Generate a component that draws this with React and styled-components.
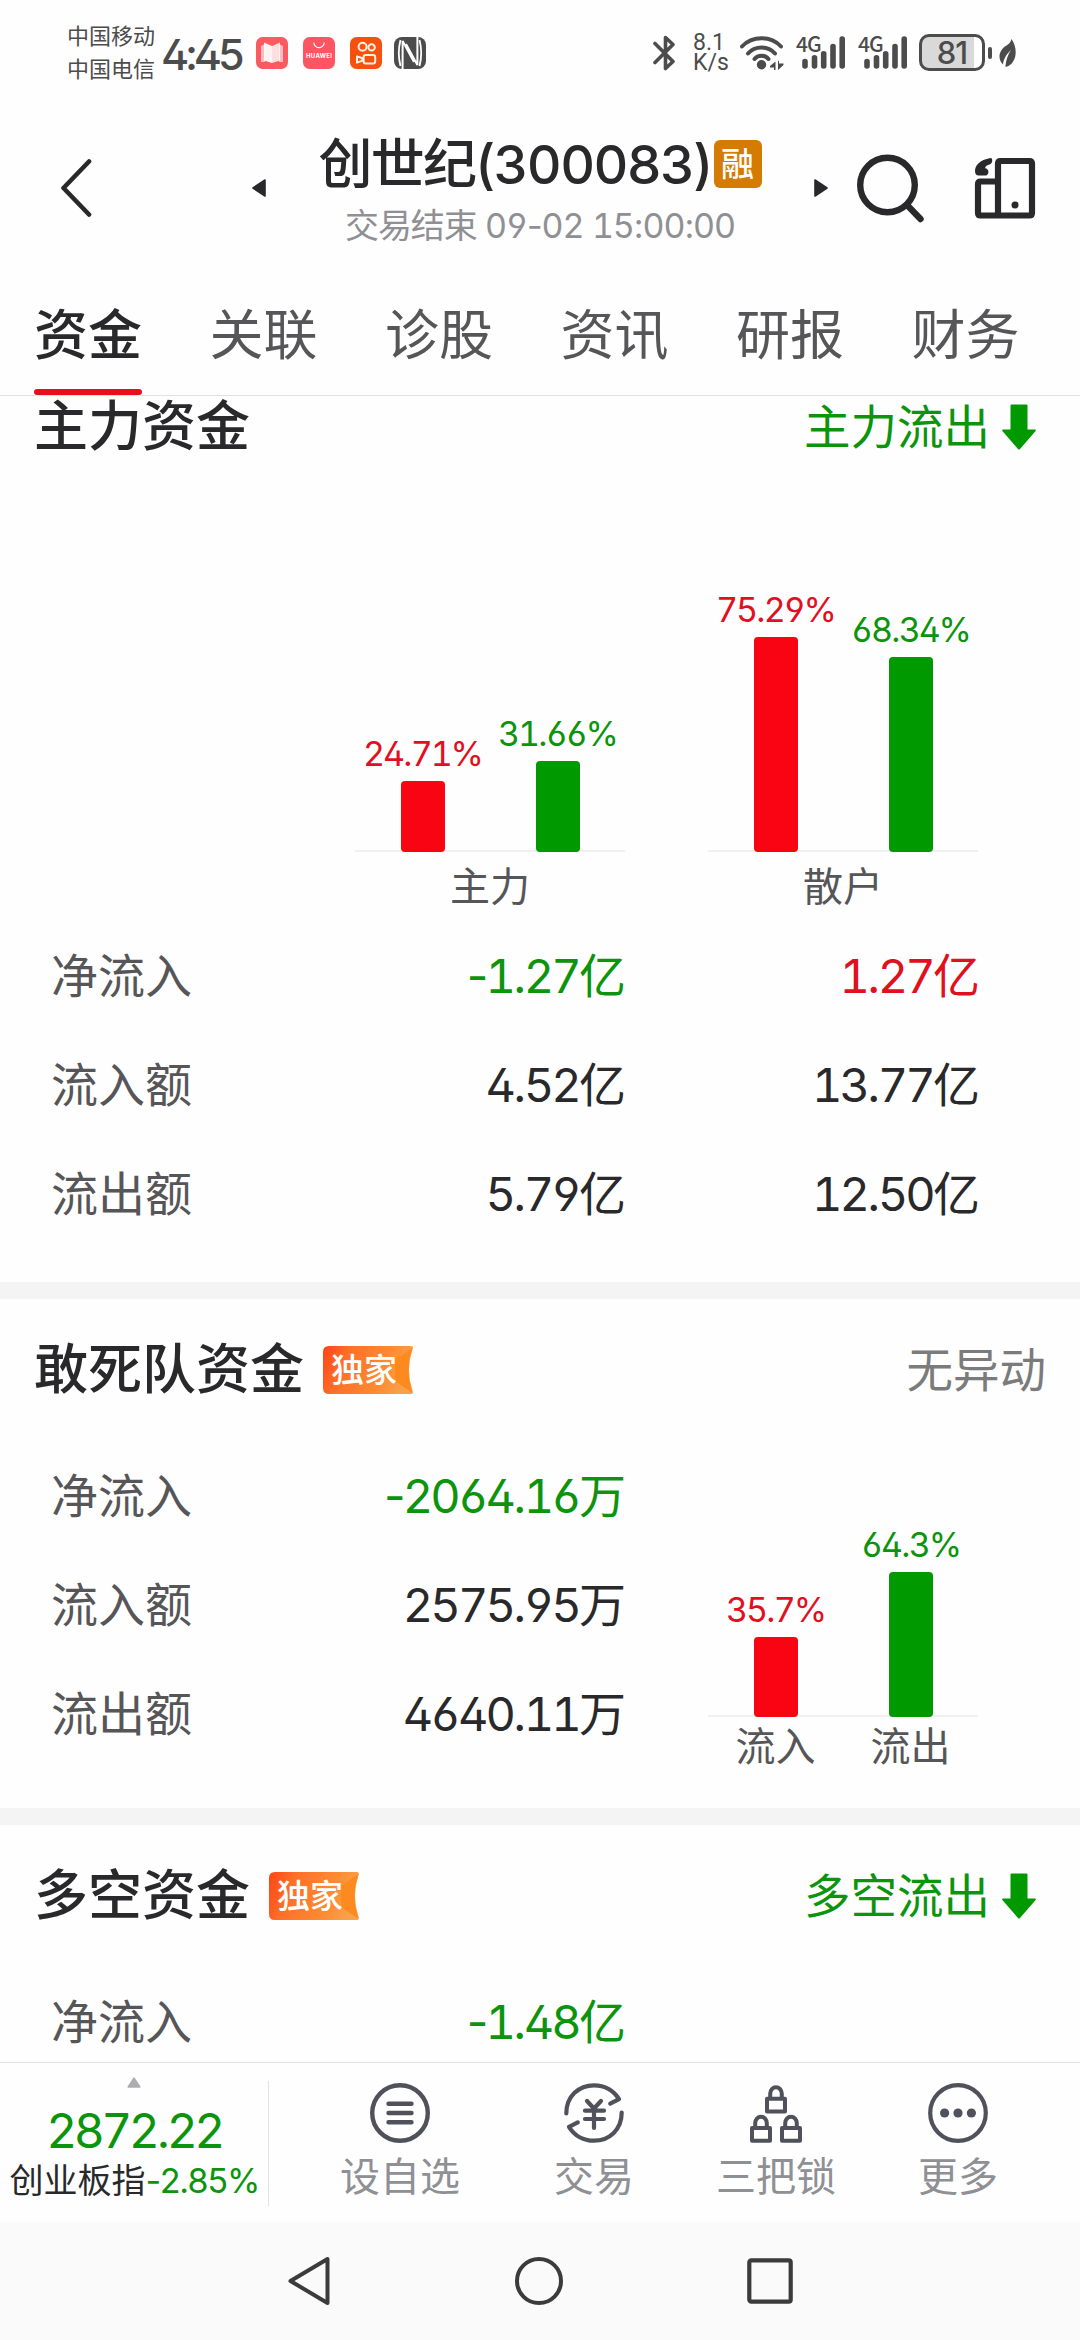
import React from 'react';
import styled, {createGlobalStyle} from 'styled-components';

const colors = {
	text : '#29292b',
	sub : '#565658',
	muted : '#8f9094',
	status : '#4c4c4c',
	red : '#e01020',
	green : '#0c940c',
	barRed : '#f80412',
	barGreen : '#009900',
	line : '#e2e2e2'
}

const tabs = ['资金', '关联', '诊股', '资讯', '研报', '财务'];

const mainCharts = [
	{
		name : '主力',
		bars : [{value : 24.71, tone : 'red'}, {value : 31.66, tone : 'green'}]
	},
	{
		name : '散户',
		bars : [{value : 75.29, tone : 'red'}, {value : 68.34, tone : 'green'}]
	}
]

const mainRows = [
	{label : '净流入', values : [{text : '-1.27亿', tone : 'green'}, {text : '1.27亿', tone : 'red'}]},
	{label : '流入额', values : [{text : '4.52亿'}, {text : '13.77亿'}]},
	{label : '流出额', values : [{text : '5.79亿'}, {text : '12.50亿'}]}
]

const squadRows = [
	{label : '净流入', values : [{text : '-2064.16万', tone : 'green'}]},
	{label : '流入额', values : [{text : '2575.95万'}]},
	{label : '流出额', values : [{text : '4640.11万'}]}
]

const squadBars = [
	{value : 35.7, tone : 'red', name : '流入'},
	{value : 64.3, tone : 'green', name : '流出'}
]

const longShortRows = [
	{label : '净流入', values : [{text : '-1.48亿', tone : 'green'}]}
]

/* ---------- icons ---------- */

const BookIcon = () => (
	<svg width="32" height="32" viewBox="0 0 32 32">
		<rect width="32" height="32" rx="6.5" fill="#fb5a60"/>
		<path d="M5 9 L9 7 V25 H5 Z M27 9 L23 7 V25 H27 Z" fill="#fff" opacity="0.6"/>
		<path d="M8 5.5 L16 9 V26 L8 23.5 Z" fill="#fff" opacity="0.92"/>
		<path d="M24 5.5 L16 9 V26 L24 23.5 Z" fill="#fff" opacity="0.8"/>
	</svg>
)

const HuaweiIcon = () => (
	<svg width="32" height="32" viewBox="0 0 32 32">
		<rect width="32" height="32" rx="6.5" fill="#fd5562"/>
		<path d="M10.8 5.5 A5.2 5.2 0 0 0 21.2 5.5" fill="none" stroke="#fff" strokeWidth="1.1"/>
		<text x="16" y="21" textAnchor="middle" textLength="26" fontFamily="Inter, sans-serif" fontWeight="700" fontSize="6" fill="#fff">HUAWEI</text>
	</svg>
)

const CameraIcon = () => (
	<svg width="32" height="32" viewBox="0 0 32 32">
		<rect width="32" height="32" rx="6.5" fill="#f8500e"/>
		<g fill="none" stroke="#fff2e4" strokeWidth="2">
			<circle cx="12.6" cy="9.8" r="4"/>
			<circle cx="21.6" cy="10.4" r="3.2"/>
			<rect x="13.6" y="18" width="11.6" height="8.4" rx="2.2"/>
			<path d="M7 19.4 L12.4 21.2 V23.6 L7 25.6 Z" strokeLinejoin="round"/>
		</g>
	</svg>
)

const NfcIcon = () => (
	<svg width="32" height="32" viewBox="0 0 32 32">
		<rect width="32" height="32" rx="8" fill={colors.status}/>
		<g fill="none" stroke="#fff" strokeWidth="1.8">
			<path d="M6.5 3 C4.4 11 4.4 21 6.5 29"/>
			<path d="M25.5 3 C27.6 11 27.6 21 25.5 29"/>
			<path d="M8.6 32 V4 L20 25 M23.4 0 V28 L12 7" strokeWidth="2"/>
		</g>
	</svg>
)

const BluetoothIcon = () => (
	<svg width="24" height="36" viewBox="0 0 24 36">
		<path d="M2 8.5 L20 26.5 L12.5 33.5 V2.5 L20 9.5 L2 27.5" fill="none" stroke={colors.status} strokeWidth="3.6" strokeLinecap="round" strokeLinejoin="round"/>
	</svg>
)

const WifiIcon = () => (
	<svg width="46" height="36" viewBox="0 0 46 36">
		<g fill="none" stroke={colors.status} strokeWidth="4" strokeLinecap="round">
			<path d="M3 11.5 C13 0.5 32 0.5 42 11.5"/>
			<path d="M9 18.5 C16 10.5 29 10.5 36 18.5"/>
			<path d="M15.5 24 C19 19.8 26 19.8 29.5 24"/>
		</g>
		<circle cx="22.5" cy="29.8" r="4.7" fill={colors.status}/>
		<path d="M31 31 L36.5 26.5 V35 H35 V32.4 H31 Z M44.5 30 L39 35 V26 H40 V28.5 H44.5 Z" fill={colors.status}/>
	</svg>
)

const SignalIcon = () => (
	<StyledSignal>
		<span>4G</span>
		<svg width="52" height="36" viewBox="0 0 52 36">
			<path d="M10 26.5 V31 M19.5 22.8 V31 M28.7 18.8 V31 M38 11.5 V31 M47.2 4 V31" stroke={colors.status} strokeWidth="5.6" strokeLinecap="round"/>
		</svg>
	</StyledSignal>
)

const LeafIcon = () => (
	<svg width="20" height="30" viewBox="0 0 20 30">
		<path d="M13.5 1 C19.5 9 19.5 23 10.5 28 C9.2 28.7 8 29 7.4 28.6 C8 22 10 16.5 13 12 C9 15.5 5.6 20.5 5 26.6 C-1 20.5 1 12 8.5 7.5 C11 6 12.6 4.2 13.5 1 Z" fill={colors.status}/>
	</svg>
)

const BackIcon = () => (
	<svg width="32" height="60" viewBox="0 0 32 60">
		<path d="M29 3.5 L3.5 30 L29 56.5" fill="none" stroke={colors.text} strokeWidth="4.6" strokeLinecap="round" strokeLinejoin="round"/>
	</svg>
)

const Triangle = ({next}) => (
	<svg width="14" height="20" viewBox="0 0 14 20">
		<path d={next ? 'M1 2 L13 10 L1 18 Z' : 'M13 2 L1 10 L13 18 Z'} fill={colors.text} stroke={colors.text} strokeWidth="1.6" strokeLinejoin="round"/>
	</svg>
)

const SearchIcon = () => (
	<svg width="72" height="72" viewBox="0 0 72 72">
		<g fill="none" stroke={colors.text} strokeWidth="6.4" strokeLinecap="round">
			<circle cx="32.5" cy="33" r="27.3"/>
			<path d="M52.5 53.5 L65.5 67"/>
		</g>
	</svg>
)

const DevicesIcon = () => (
	<svg width="62" height="64" viewBox="0 0 62 64">
		<g fill="none" stroke={colors.text} strokeWidth="6.2" strokeLinejoin="round">
			<path d="M24 60 V7.5 Q24 5 26.5 5 H55.5 Q58 5 58 7.5 V57 Q58 59.5 55.5 59.5 H6.5 Q4 59.5 4 57 V28 Q4 25.5 6.5 25.5 H24"/>
		</g>
		<circle cx="41" cy="49" r="3.5" fill={colors.text}/>
		<path d="M16.5 2 C5.5 4 1 9.5 1 15 C1 18 2.5 19.5 4.5 19.5 H11.5 C15.5 19.5 15.5 12.5 11 12.3 C11.5 10 13 9 16 8.2 C19 7.2 18.8 1.8 16.5 2 Z" fill={colors.text}/>
	</svg>
)

const DownArrow = () => (
	<svg width="34" height="46" viewBox="0 0 34 46">
		<path d="M8.5 1.5 Q8.5 0.5 9.5 0.5 H24.5 Q25.5 0.5 25.5 1.5 V25.5 H33 Q34.3 25.8 33.6 27 L18 45 Q17 46 16 45 L0.4 27 Q-0.3 25.8 1 25.5 H8.5 Z" fill={colors.barGreen}/>
	</svg>
)

const ListIcon = () => (
	<svg width="62" height="62" viewBox="0 0 62 62">
		<g fill="none" stroke="#50515a" strokeWidth="4.4" strokeLinecap="round">
			<circle cx="31" cy="31" r="27.8"/>
			<path d="M19.5 21.7 H42.5 M19.5 31 H42.5 M19.5 40.3 H42.5"/>
		</g>
	</svg>
)

const TradeIcon = () => (
	<svg width="62" height="62" viewBox="0 0 62 62">
		<g fill="none" stroke="#50515a" strokeWidth="4.2" strokeLinecap="round" strokeLinejoin="round">
			<path d="M3.3 31.5 C3.3 14 16 3.3 31 3.3 C42 3.3 51 9 56 17.2 L47.2 21.6"/>
			<path d="M58.7 30.5 C58.7 48 46 58.7 31 58.7 C20 58.7 11 53 6 44.8 L14.8 40.4"/>
			<path d="M24 19 L31 26.5 L38 19 M22 28.7 H41 M22 37 H41 M31 27 V46"/>
		</g>
	</svg>
)

const LocksIcon = () => (
	<svg width="62" height="62" viewBox="0 0 62 62">
		<g fill="none" stroke="#50515a" strokeWidth="4" strokeLinejoin="round">
			<path d="M22 16.7 H40 V29.5 H22 Z M25.2 16.5 V11.5 A5.8 6.3 0 0 1 36.8 11.5 V16.5"/>
			<path d="M7 46 H25 V58.8 H7 Z M10.2 46 V41 A5.8 6.3 0 0 1 21.8 41 V46"/>
			<path d="M37 46 H55 V58.8 H37 Z M40.2 46 V41 A5.8 6.3 0 0 1 51.8 41 V46"/>
		</g>
	</svg>
)

const MoreIcon = () => (
	<svg width="62" height="62" viewBox="0 0 62 62">
		<circle cx="31" cy="31" r="27.8" fill="none" stroke="#50515a" strokeWidth="4.2"/>
		<g fill="#50515a">
			<circle cx="17.6" cy="31" r="4.6"/>
			<circle cx="31" cy="31" r="4.6"/>
			<circle cx="44.4" cy="31" r="4.6"/>
		</g>
	</svg>
)

const ExclusiveBadge = () => (
	<StyledBadge>
		<svg width="90" height="48" viewBox="0 0 90 48">
			<defs>
				<linearGradient id="exclusive" x1="0" y1="0" x2="1" y2="0.2">
					<stop offset="0" stopColor="#fe4415"/>
					<stop offset="0.3" stopColor="#fe702a"/>
					<stop offset="0.75" stopColor="#fd8b32"/>
					<stop offset="1" stopColor="#f9a04a"/>
				</linearGradient>
			</defs>
			<path d="M6 0 H88 Q91 0.5 89.5 3.5 Q82.5 24 89.5 44.5 Q91 47.5 88 48 H6 Q0 48 0 42 V6 Q0 0 6 0 Z" fill="url(#exclusive)"/>
			<path d="M89 2 L72 14 V35 L89 46.5 Q82 24 89 2 Z" fill="#fc8a1e"/>
		</svg>
		<span>独家</span>
	</StyledBadge>
)

const actions = [
	{name : '设自选', Icon : ListIcon},
	{name : '交易', Icon : TradeIcon},
	{name : '三把锁', Icon : LocksIcon},
	{name : '更多', Icon : MoreIcon}
]

/* ---------- parts ---------- */

// digits share one width, punctuation keeps its own
const Num = ({children}) => (
	String(children).split(/(\d+)/).filter(Boolean).map((part, index) =>
		/\d/.test(part) ? <StyledDigits key={index}>{part}</StyledDigits> : part
	)
)

const BarChart = ({bars, scale, height}) => (
	<StyledBars $height={height}>
		{bars.map(({value, tone}, index) =>
			<StyledBarCol key={index} $tone={tone}>
				<span><Num>{`${value}%`}</Num></span>
				<StyledBar $tone={tone} style={{height: Math.round(value*scale)}}/>
			</StyledBarCol>
		)}
	</StyledBars>
)

const DataRows = ({rows}) => (
	<div>
		{rows.map(({label, values}) =>
			<StyledRow key={label}>
				<StyledLabel>{label}</StyledLabel>
				{values.map(({text, tone}, index) =>
					<StyledValue key={index} $tone={tone}><Num>{text}</Num></StyledValue>
				)}
			</StyledRow>
		)}
	</div>
)

export default function App(){
	return(
		<StyledPage>
			<GlobalStyle/>
			<StyledStatus>
				<StyledCarriers>
					<span>中国移动</span>
					<span>中国电信</span>
				</StyledCarriers>
				<StyledClock>4:45</StyledClock>
				<StyledNotices>
					<BookIcon/>
					<HuaweiIcon/>
					<CameraIcon/>
					<NfcIcon/>
				</StyledNotices>
				<StyledSystem>
					<BluetoothIcon/>
					<StyledSpeed>
						<span>8.1</span>
						<span>K/s</span>
					</StyledSpeed>
					<WifiIcon/>
					<SignalIcon/>
					<SignalIcon/>
					<StyledBattery><span>81</span></StyledBattery>
					<LeafIcon/>
				</StyledSystem>
			</StyledStatus>

			<StyledHeader>
				<BackIcon/>
				<StyledStock>
					<Triangle/>
					<div>
						<StyledTitle>
							<span><Num>创世纪(300083)</Num></span>
							<i>融</i>
						</StyledTitle>
						<StyledSubtitle><Num>交易结束 09-02 15:00:00</Num></StyledSubtitle>
					</div>
					<Triangle next/>
				</StyledStock>
				<SearchIcon/>
				<DevicesIcon/>
			</StyledHeader>

			<StyledTabs>
				{tabs.map((tab, index) =>
					<StyledTab key={tab} $active={index === 0}>{tab}</StyledTab>
				)}
			</StyledTabs>

			<StyledContent>
				<StyledSection>
					<StyledHead $height={62}>
						<h2>主力资金</h2>
						<StyledFlow><span>主力流出</span><DownArrow/></StyledFlow>
					</StyledHead>
					<StyledCharts>
						{mainCharts.map(({name, bars}) =>
							<StyledChart key={name}>
								<BarChart bars={bars} scale={2.86} height={394}/>
								<StyledNames $height={70}><span>{name}</span></StyledNames>
							</StyledChart>
						)}
					</StyledCharts>
					<DataRows rows={mainRows}/>
				</StyledSection>

				<StyledSection>
					<StyledHead $height={141}>
						<h2>敢死队资金</h2>
						<ExclusiveBadge/>
						<StyledQuiet>无异动</StyledQuiet>
					</StyledHead>
					<StyledSplit>
						<DataRows rows={squadRows}/>
						<StyledChart>
							<BarChart bars={squadBars} scale={2.25} height={277}/>
							<StyledNames $height={59}>
								{squadBars.map(({name}) => <span key={name}>{name}</span>)}
							</StyledNames>
						</StyledChart>
					</StyledSplit>
				</StyledSection>

				<StyledSection>
					<StyledHead $height={141}>
						<h2>多空资金</h2>
						<ExclusiveBadge/>
						<StyledFlow><span>多空流出</span><DownArrow/></StyledFlow>
					</StyledHead>
					<DataRows rows={longShortRows}/>
				</StyledSection>
			</StyledContent>

			<StyledToolbar>
				<StyledIndex>
					<svg width="14" height="11" viewBox="0 0 14 11">
						<path d="M7 1.2 L12.8 10 H1.2 Z" fill="#adadaf" stroke="#adadaf" strokeWidth="1.6" strokeLinejoin="round"/>
					</svg>
					<strong><Num>2872.22</Num></strong>
					<p>创业板指<span><Num>-2.85%</Num></span></p>
				</StyledIndex>
				<StyledActions>
					{actions.map(({name, Icon}) =>
						<StyledAction key={name}>
							<Icon/>
							<span>{name}</span>
						</StyledAction>
					)}
				</StyledActions>
			</StyledToolbar>

			<StyledNav>
				<svg width="44" height="50" viewBox="0 0 44 50">
					<path d="M40.5 3 V47 L3.5 25 Z" fill="none" stroke="#3b3b3b" strokeWidth="4" strokeLinejoin="round"/>
				</svg>
				<svg width="50" height="50" viewBox="0 0 50 50">
					<circle cx="25" cy="25" r="22" fill="none" stroke="#3b3b3b" strokeWidth="4"/>
				</svg>
				<svg width="46" height="46" viewBox="0 0 46 46">
					<rect x="2.3" y="2.3" width="41.4" height="41.4" rx="2" fill="none" stroke="#3b3b3b" strokeWidth="4.2"/>
				</svg>
			</StyledNav>
		</StyledPage>
	)
}

/* ---------- styles ---------- */

const toneColor = ({$tone}) => $tone ? colors[$tone] : colors.text;

const GlobalStyle = createGlobalStyle`
	*{
		box-sizing: border-box;
	}
	body{
		margin: 0;
		background: #fefefe;
	}
	h2, p{
		margin: 0;
		font-weight: inherit;
	}
	svg{
		display: block;
		flex: none;
	}
`

const StyledPage = styled.div`
	width: 1080px;
	height: 2340px;
	display: flex;
	flex-direction: column;
	overflow: hidden;
	color: ${colors.text};
	background: #fefefe;
	font-family: Inter, "Noto Sans CJK SC", sans-serif;
	font-feature-settings: "cv02", "cv03", "cv04";
	white-space: nowrap;
`

const StyledDigits = styled.span`
	font-feature-settings: "tnum", "cv02", "cv03", "cv04";
`

const StyledStatus = styled.div`
	height: 105px;
	padding: 0 62px 0 67px;
	display: flex;
	align-items: center;
	color: ${colors.status};
`

const StyledCarriers = styled.div`
	display: flex;
	flex-direction: column;
	font-size: 22px;
	line-height: 33px;
`

const StyledClock = styled.div`
	width: 84px;
	margin-left: 6px;
	font-size: 43px;
	font-weight: 500;
	letter-spacing: -4.2px;
	padding-top: 2px;
`

const StyledNotices = styled.div`
	display: flex;
	margin-left: 11px;
	gap: 15px;
	svg:last-child{
		margin-left: -3px;
	}
`

const StyledSystem = styled.div`
	display: flex;
	align-items: center;
	margin-left: auto;
	gap: 10px;
`

const StyledSpeed = styled.div`
	width: 36px;
	margin-left: 6px;
	display: flex;
	flex-direction: column;
	font-family: Roboto, sans-serif;
	font-size: 23px;
	line-height: 20px;
`

const StyledSignal = styled.div`
	display: grid;
	span, svg{
		grid-area: 1 / 1;
	}
	span{
		margin-left: 1px;
		font-family: "Noto Sans CJK SC", sans-serif;
		font-size: 21px;
		font-weight: 500;
		line-height: 17px;
		letter-spacing: -1px;
	}
`

const StyledBattery = styled.div`
	width: 66px;
	height: 37px;
	margin-right: 3px;
	border: 3px solid ${colors.status};
	border-radius: 10px;
	position: relative;
	text-align: center;
	font-size: 31px;
	font-weight: 500;
	line-height: 31px;
	letter-spacing: -1px;
	background: linear-gradient(90deg, #d9d9d9 52px, #fefefe 52px);
	&:after{
		content: '';
		width: 4px;
		height: 12px;
		border-radius: 2px;
		background: ${colors.status};
		position: absolute;
		top: 10px;
		right: -10px;
	}
`

const StyledHeader = styled.div`
	height: 166px;
	padding-left: 60px;
	display: flex;
	align-items: center;
	svg:nth-of-type(2){
		margin-left: 27px;
	}
	svg:nth-of-type(3){
		margin-left: 47px;
	}
`

const StyledStock = styled.div`
	width: 576px;
	margin-left: 160px;
	display: flex;
	align-items: center;
	justify-content: space-between;
	text-align: center;
	svg:nth-of-type(2){
		margin-left: 0;
	}
`

const StyledTitle = styled.div`
	display: flex;
	align-items: center;
	justify-content: center;
	margin-top: 13px;
	font-size: 54px;
	font-weight: 500;
	line-height: 61px;
	letter-spacing: -1.7px;
	i{
		width: 48px;
		height: 48px;
		margin-left: 2px;
		border-radius: 6px;
		background: #d67b02;
		color: #fff;
		font-size: 33px;
		font-style: normal;
		line-height: 48px;
		letter-spacing: 0;
	}
`

const StyledSubtitle = styled.div`
	color: ${colors.muted};
	font-size: 34px;
	line-height: 61px;
	letter-spacing: -1.1px;
`

const StyledTabs = styled.div`
	height: 125px;
	padding-left: 34px;
	display: flex;
	gap: 67.5px;
	border-bottom: 1px solid ${colors.line};
`

const StyledTab = styled.div`
	width: 108px;
	padding-top: 11px;
	font-size: 54px;
	line-height: 107px;
	font-weight: ${({$active}) => $active ? 500 : 400};
	color: ${({$active}) => $active ? colors.text : colors.sub};
	&:after{
		content: '';
		display: block;
		height: 6px;
		border-radius: 3px;
		background: ${({$active}) => $active ? '#e70e1d' : 'transparent'};
	}
`

const StyledContent = styled.div`
	height: 1666px;
	overflow: hidden;
`

const StyledSection = styled.section`
	& + &{
		border-top: 17px solid #f4f4f4;
	}
	&:nth-child(1){
		height: 886px;
	}
	&:nth-child(2){
		height: 526px;
	}
`

const StyledHead = styled.div`
	height: ${({$height}) => $height}px;
	padding: 0 44px 0 34px;
	display: flex;
	align-items: center;
	h2{
		font-size: 54px;
		font-weight: 500;
		line-height: 60px;
	}
`

const StyledBadge = styled.div`
	margin-left: 19px;
	display: grid;
	align-items: center;
	svg, span{
		grid-area: 1 / 1;
	}
	span{
		padding-left: 8px;
		color: #fff;
		font-size: 33px;
		font-weight: 500;
		line-height: 48px;
	}
`

const StyledFlow = styled.div`
	margin-left: auto;
	display: flex;
	align-items: center;
	gap: 12px;
	color: ${colors.green};
	font-size: 46.5px;
	line-height: 56px;
`

const StyledQuiet = styled.div`
	margin-left: auto;
	margin-right: -10px;
	color: #7b7b7b;
	font-size: 46.5px;
	line-height: 56px;
`

const StyledCharts = styled.div`
	height: 462px;
	display: flex;
	gap: 83px;
	padding-left: 355px;
`

const StyledChart = styled.div`
	width: 270px;
`

const StyledBars = styled.div`
	height: ${({$height}) => $height}px;
	display: flex;
	align-items: flex-end;
	box-shadow: inset 0 -2px #f0f0f0;
`

const StyledBarCol = styled.div`
	flex: 1;
	display: flex;
	flex-direction: column;
	align-items: center;
	color: ${toneColor};
	font-size: 34px;
	line-height: 55px;
	letter-spacing: -2.1px;
`

const StyledBar = styled.div`
	width: 44px;
	border-radius: 4px;
	background: ${({$tone}) => $tone === 'red' ? colors.barRed : colors.barGreen};
`

const StyledNames = styled.div`
	display: flex;
	justify-content: space-around;
	color: ${colors.sub};
	font-size: 40px;
	line-height: ${({$height}) => $height}px;
`

const StyledRow = styled.div`
	height: 109px;
	padding: 0 0 5px 51px;
	display: flex;
	align-items: center;
	font-size: 47px;
`

const StyledLabel = styled.div`
	width: 219px;
	color: ${colors.sub};
`

const StyledValue = styled.div`
	width: 353px;
	margin-right: 1px;
	text-align: right;
	color: ${toneColor};
	letter-spacing: -2.9px;
`

const StyledSplit = styled.div`
	display: flex;
	gap: 84px;
`

const StyledToolbar = styled.div`
	height: 160px;
	border-top: 1px solid ${colors.line};
	display: flex;
	align-items: center;
`

const StyledIndex = styled.div`
	width: 269px;
	height: 125px;
	margin-top: 2px;
	border-right: 1px solid ${colors.line};
	display: flex;
	flex-direction: column;
	align-items: center;
	svg{
		margin-top: -4px;
	}
	strong{
		margin-top: 15px;
		color: ${colors.green};
		font-size: 48px;
		font-weight: 400;
		line-height: 56px;
		letter-spacing: -3.6px;
	}
	p{
		font-size: 34px;
		line-height: 44px;
	}
	p span{
		color: ${colors.green};
		letter-spacing: -2px;
	}
`

const StyledActions = styled.div`
	margin-left: 59px;
	padding-top: 5px;
	display: grid;
	grid-template-columns: 144px 80px 120px 80px;
	column-gap: 82px;
	justify-items: center;
`

const StyledAction = styled.div`
	display: flex;
	flex-direction: column;
	align-items: center;
	color: ${colors.muted};
	font-size: 40px;
	line-height: 65px;
`

const StyledNav = styled.div`
	height: 118px;
	padding: 0 287px;
	display: flex;
	align-items: center;
	justify-content: space-between;
	background: #fafafa;
`
